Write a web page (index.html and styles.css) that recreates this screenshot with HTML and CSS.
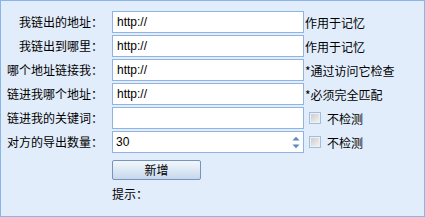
FILE: index.html
```html
<!DOCTYPE html>
<html lang="zh-CN">
<head>
<meta charset="utf-8">
<title>链接设置</title>
<link rel="stylesheet" href="styles.css">
</head>
<body>
<div class="panel">
  <div class="form">
    <label class="lbl">我链出的地址：</label>
    <input class="field" type="text" value="http://">
    <span class="note">作用于记忆</span>

    <label class="lbl">我链出到哪里：</label>
    <input class="field" type="text" value="http://">
    <span class="note">作用于记忆</span>

    <label class="lbl">哪个地址链接我：</label>
    <input class="field" type="text" value="http://">
    <span class="note">*通过访问它检查</span>

    <label class="lbl">链进我哪个地址：</label>
    <input class="field" type="text" value="http://">
    <span class="note">*必须完全匹配</span>

    <label class="lbl">链进我的关键词：</label>
    <input class="field" type="text" value="">
    <span class="check"><span class="box"></span><span class="check-text">不检测</span></span>

    <label class="lbl">对方的导出数量：</label>
    <div class="field spin">
      <span class="spin-val">30</span>
      <svg class="spin-arrows" width="8" height="13" viewBox="0 0 8 13">
        <path d="M0.5 4.5 L4 0.8 L7.5 4.5 Z" fill="#5d89b8"/>
        <path d="M0.5 8.5 L4 12.2 L7.5 8.5 Z" fill="#5d89b8"/>
      </svg>
    </div>
    <span class="check"><span class="box"></span><span class="check-text">不检测</span></span>

    <div class="btn-row"><button class="btn" type="button">新增</button></div>
    <div class="tip">提示：</div>
  </div>
</div>
</body>
</html>
```

FILE: styles.css
```css
html, body {
  margin: 0;
  padding: 0;
  background: #ffffff;
}

.panel {
  box-sizing: border-box;
  width: 425px;
  height: 217px;
  border: 1px solid #8db4e6;
  background: #e2edfb;
  padding-top: 10px;
  font-family: "Noto Sans CJK SC", "Liberation Sans", sans-serif;
  font-size: 12px;
  color: #000000;
}

.form {
  display: grid;
  grid-template-columns: 111px 192px 1fr;
  grid-auto-rows: 22px;
  row-gap: 2px;
  align-items: center;
}

.lbl {
  box-sizing: border-box;
  padding-right: 9px;
  text-align: right;
  white-space: nowrap;
  line-height: 22px;
}

.field {
  box-sizing: border-box;
  width: 192px;
  height: 22px;
  margin: 0;
  border: 1px solid #8fb3e2;
  background: #ffffff;
  padding: 0 4px;
  font-family: "Liberation Sans", Arial, sans-serif;
  font-size: 12px;
  color: #000000;
  outline: none;
}

.note {
  padding-left: 1px;
  white-space: nowrap;
}

.check {
  display: flex;
  align-items: center;
  padding-left: 5px;
}

.box {
  box-sizing: border-box;
  width: 12px;
  height: 12px;
  border: 1px solid #9fbde3;
  background: linear-gradient(135deg, #c9c9c9 0%, #e4e4e4 60%, #f4f4f4 100%);
  box-shadow: inset 0 0 0 1px #f0f0f0;
}

.check-text {
  margin-left: 6px;
  white-space: nowrap;
}

.spin {
  display: flex;
  align-items: center;
  justify-content: space-between;
  padding: 0 3px 0 3px;
}

.spin-val {
  font-family: "Liberation Sans", Arial, sans-serif;
}

.spin-arrows {
  display: block;
}

.btn-row {
  grid-column: 2;
  height: 20px;
  margin-top: 8px;
}

.btn {
  box-sizing: border-box;
  width: 89px;
  height: 20px;
  margin: 0;
  padding: 0;
  border: 1px solid #7595bd;
  border-radius: 2px;
  background: linear-gradient(#f3f7fc 0%, #dde8f5 50%, #c6d7ec 100%);
  font-family: "Noto Sans CJK SC", sans-serif;
  font-size: 12px;
  color: #000000;
  line-height: 18px;
}

.tip {
  grid-column: 2;
  margin-top: 7px;
  line-height: 22px;
}
```
